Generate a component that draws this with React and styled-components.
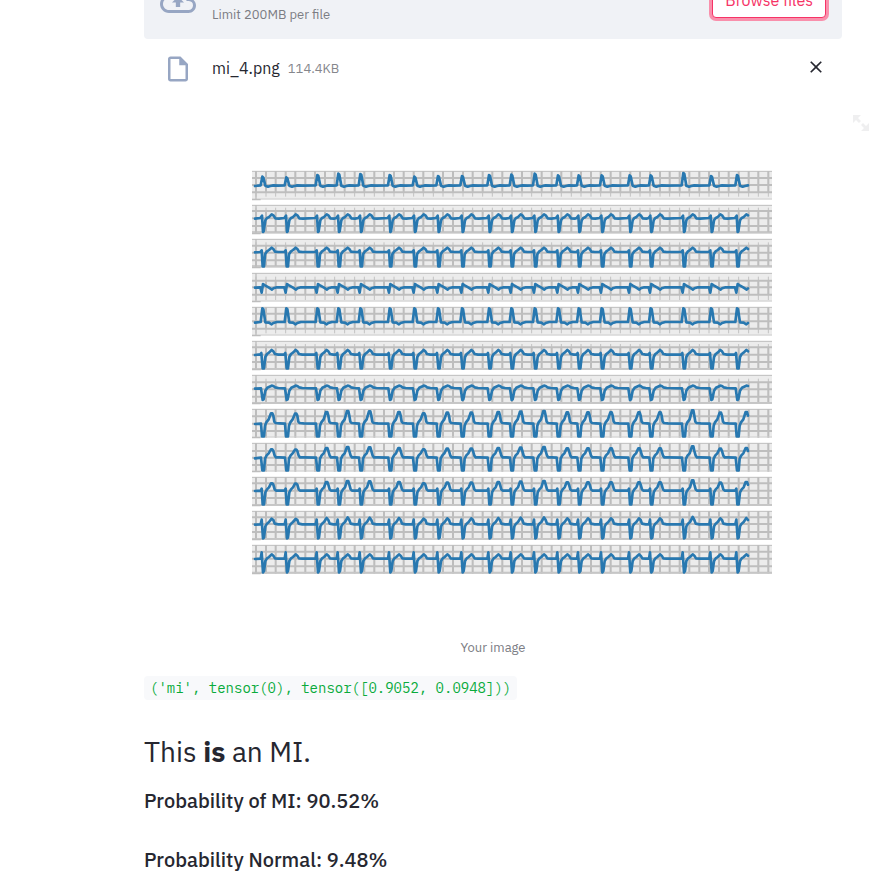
import React from "react";
import styled, { createGlobalStyle } from "styled-components";
import {
  MdOutlineCloudUpload,
  MdOutlineInsertDriveFile,
  MdClose,
} from "react-icons/md";

const GlobalStyle = createGlobalStyle`
  * { box-sizing: border-box; }
  body {
    margin: 0;
    background: #ffffff;
    color: #262730;
    font-family: "IBM Plex Sans", Roboto, sans-serif;
    font-size: 16px;
    line-height: 24px;
  }
`;

const Page = styled.main`
  display: flow-root;
  padding: 0 35px 0 144px;
`;

const Dropzone = styled.section`
  display: flex;
  align-items: center;
  height: 78px;
  margin-top: -39px;
  padding: 16px;
  border-radius: 4px;
  background: #f0f2f6;
`;

const CloudIcon = styled(MdOutlineCloudUpload)`
  width: 36px;
  height: 36px;
  margin-top: 2px;
  margin-right: 16px;
  color: #97a6c3;
`;

const Limit = styled.small`
  flex: 1;
  align-self: flex-end;
  font-size: 13px;
  line-height: 16px;
  color: #7c7d84;
`;

const BrowseButton = styled.button`
  height: 36px;
  padding: 0 12px;
  border: 1px solid #f63366;
  border-radius: 4px;
  background: #ffffff;
  box-shadow: 0 0 0 3px #f990ac;
  color: #f63366;
  font: inherit;
  cursor: pointer;
`;

const FileRow = styled.div`
  display: flex;
  align-items: center;
  height: 56px;
  padding: 0 16px 0 19px;
`;

const FileIcon = styled(MdOutlineInsertDriveFile)`
  width: 30px;
  height: 30px;
  margin-top: 4px;
  margin-right: 19px;
  color: #97a6c3;
`;

const FileName = styled.span`
  margin-right: 8px;
  padding-top: 2px;
`;

const FileSize = styled.small`
  flex: 1;
  padding-top: 4px;
  font-size: 13px;
  color: #85868c;
`;

const RemoveButton = styled.button`
  display: flex;
  padding: 0;
  border: 0;
  background: none;
  color: #262730;
  font-size: 20px;
  cursor: pointer;
`;

const Figure = styled.figure`
  position: relative;
  margin: 10px 0 0;
`;

const Chart = styled.svg`
  display: block;
  width: 100%;
`;

const ExpandButton = styled.button`
  position: absolute;
  top: 10px;
  right: -27px;
  display: flex;
  padding: 0;
  border: 0;
  background: none;
  color: #efeff0;
  cursor: pointer;
`;

const Caption = styled.figcaption`
  margin-top: 6px;
  font-size: 13px;
  text-align: center;
  color: #7c7d84;
`;

const Result = styled.p`
  margin: 15px 0 0;
`;

const Code = styled.code`
  display: inline-block;
  padding: 0 6px;
  border-radius: 4px;
  background: #f8f9fb;
  color: #09ab3b;
  font-family: "IBM Plex Mono", "Liberation Mono", monospace;
  font-size: 14px;
`;

const Verdict = styled.h2`
  margin: 32px 0 0;
  font-size: 28px;
  font-weight: 400;
  line-height: 40px;
`;

const Probability = styled.h3`
  margin: ${(p) => (p.$spaced ? 31 : 15)}px 0 0;
  font-size: 20px;
  font-weight: 500;
  line-height: 28px;
`;

const STRIP = { left: 324, right: 1884, top: 198, pitch: 102, height: 86 };
const TRACE = { start: 333, end: 1812 };

const BEATS = [
  357, 429, 522, 585, 651, 739, 813, 884, 956, 1037, 1104, 1174, 1244, 1306,
  1375, 1459, 1522, 1620, 1703, 1781,
];

const HEIGHT_CHANGE = [
  4, 5, 0, -3, -2, 0, 4, 2, 2, 0, -1, -3, 1, 1, 1, 1, 1, -5, 2, 0,
];

// Per lead: baseline, horizontal grid lines, span of the wide and the thin
// vertical lines, and one beat as [dx, y, share of the height change].
const LEADS = [
  { base: 44, rows: [21, 42, 64], wide: [0, 64], thin: [0, 77],
    beat: [[-7, 43], [-2, 12, 1.3], [1, 15, 1.3], [7, 44], [15, 47], [22, 45], [31, 43], [46, 44]] },
  { base: 40, rows: [18, 40, 63, 82], wide: [18, 82], thin: [8, 84],
    beat: [[-8, 39], [-3, 32], [0, 81], [2, 79], [7, 46], [12, 39], [17, 37], [26, 28], [31, 31], [37, 40], [48, 41]] },
  { base: 39, rows: [20, 41, 64, 82], wide: [20, 84], thin: [10, 84],
    beat: [[-8, 39], [-4, 34], [-1, 82], [3, 82], [6, 46], [12, 37], [18, 33], [26, 26], [31, 30], [36, 38], [46, 39]] },
  { base: 43, rows: [23, 43, 65], wide: [23, 65], thin: [11, 81],
    beat: [[-8, 43], [-4, 59], [0, 33], [6, 37], [18, 44], [27, 50], [31, 46], [42, 43]] },
  { base: 46, rows: [20, 43, 65], wide: [0, 65], thin: [0, 79],
    beat: [[-7, 45], [-2, 4], [1, 6], [7, 46], [18, 47], [26, 52], [31, 48], [42, 45]] },
  { base: 41, rows: [19, 41, 63, 84], wide: [19, 86], thin: [9, 86],
    beat: [[-8, 40], [-5, 36], [-1, 82], [3, 82], [7, 48], [12, 39], [18, 35], [26, 27], [31, 31], [36, 39], [46, 41]] },
  { base: 40, rows: [22, 43, 65, 84], wide: [22, 84], thin: [11, 84],
    beat: [[-6, 40], [-1, 75], [2, 73], [7, 47], [13, 38], [26, 32], [31, 33], [36, 37], [46, 39]] },
  { base: 44, rows: [22, 44, 66], wide: [0, 86], thin: [0, 86],
    beat: [[-6, 44], [-3, 82], [3, 82], [6, 50], [10, 40], [17, 31], [24, 9, 1], [28, 9, 1], [31, 20], [34, 38], [38, 42], [50, 43]] },
  { base: 45, rows: [24, 44, 66], wide: [0, 86], thin: [0, 86],
    beat: [[-6, 44], [-2, 82], [3, 82], [6, 47], [11, 37], [17, 31], [24, 15, 1], [28, 15, 1], [31, 24], [35, 38], [39, 43], [50, 43]] },
  { base: 41, rows: [19, 41, 63, 84], wide: [0, 86], thin: [0, 86],
    beat: [[-7, 41], [-4, 35], [-1, 82], [3, 82], [7, 46], [12, 37], [18, 31], [24, 15, 1], [28, 15, 1], [31, 23], [35, 37], [39, 41], [50, 41]] },
  { base: 40, rows: [19, 39, 63, 84], wide: [0, 86], thin: [0, 86],
    beat: [[-7, 40], [-4, 26], [0, 82], [3, 80], [7, 46], [12, 38], [18, 33], [26, 21, 0.6], [31, 27], [35, 38], [46, 40]] },
  { base: 41, rows: [20, 41, 64, 83], wide: [0, 86], thin: [0, 86],
    beat: [[-7, 41], [-4, 22], [0, 82], [3, 78], [7, 48], [12, 40], [18, 36], [26, 28], [31, 32], [36, 40], [46, 41]] },
];

const COLUMNS = Array.from({ length: 53 }, (_, i) => Math.round(336 + i * 29.55));

function verticals([from, to], top) {
  return COLUMNS.map((x) => `M${x} ${top + from}V${top + to}`).join("");
}

function trace({ base, beat }, top) {
  const points = [[TRACE.start, base + 1]];
  BEATS.forEach((x, i) => {
    beat.forEach(([dx, y, share = 0]) => {
      points.push([x + dx, y + HEIGHT_CHANGE[i] * share]);
    });
  });
  return points
    .filter(([x]) => x <= TRACE.end)
    .map(([x, y]) => `${x},${Math.round(top + y)}`)
    .join(" ");
}

function Lead({ lead, index }) {
  const { left, right, height } = STRIP;
  const top = STRIP.top + index * STRIP.pitch;
  const rows = lead.rows.map((y) => `M${left} ${top + y}H${right}`).join("");
  return (
    <g fill="none">
      <rect x={left} y={top} width={right - left} height={height} fill="#ececec" />
      <path d={verticals(lead.thin, top)} stroke="#c2c2c2" strokeWidth="3" />
      <path d={verticals(lead.wide, top)} stroke="#bdbdbd" strokeWidth="6" />
      <path d={rows} stroke="#bebebe" strokeWidth="6" />
      <path d={`M${left} ${top + 1}H${right}`} stroke="#bebebe" strokeWidth="3" />
      <path d={`M${left} ${top + height - 2}H${right}`} stroke="#cfcfcf" strokeWidth="3" />
      <path d={`M336 ${top}V${top + height}M${left} ${top + height}h26`} stroke="#bdbdbd" strokeWidth="4" />
      <polyline
        points={trace(lead, top)}
        stroke="#2878b0"
        strokeWidth="8"
        strokeLinejoin="round"
        strokeLinecap="round"
      />
    </g>
  );
}

function EcgChart() {
  return (
    <Chart viewBox="0 0 2094 1575" role="img" aria-label="Twelve ECG leads">
      {LEADS.map((lead, i) => (
        <Lead key={i} lead={lead} index={i} />
      ))}
    </Chart>
  );
}

export default function App() {
  return (
    <>
      <GlobalStyle />
      <Page>
        <Dropzone>
          <CloudIcon />
          <Limit>Limit 200MB per file</Limit>
          <BrowseButton type="button">Browse files</BrowseButton>
        </Dropzone>
        <FileRow>
          <FileIcon />
          <FileName>mi_4.png</FileName>
          <FileSize>114.4KB</FileSize>
          <RemoveButton type="button" aria-label="Remove file">
            <MdClose />
          </RemoveButton>
        </FileRow>
        <Figure>
          <EcgChart />
          <ExpandButton type="button" aria-label="View fullscreen">
            <svg width="16" height="16" viewBox="0 0 8 8" fill="currentColor">
              <path d="M0 0v4l1.5-1.5 1.5 1.5 1-1-1.5-1.5 1.5-1.5h-4zm5 4l-1 1 1.5 1.5-1.5 1.5h4v-4l-1.5 1.5-1.5-1.5z" />
            </svg>
          </ExpandButton>
          <Caption>Your image</Caption>
        </Figure>
        <Result>
          <Code>('mi', tensor(0), tensor([0.9052, 0.0948]))</Code>
        </Result>
        <Verdict>
          This <strong>is</strong> an MI.
        </Verdict>
        <Probability>Probability of MI: 90.52%</Probability>
        <Probability $spaced>Probability Normal: 9.48%</Probability>
      </Page>
    </>
  );
}
